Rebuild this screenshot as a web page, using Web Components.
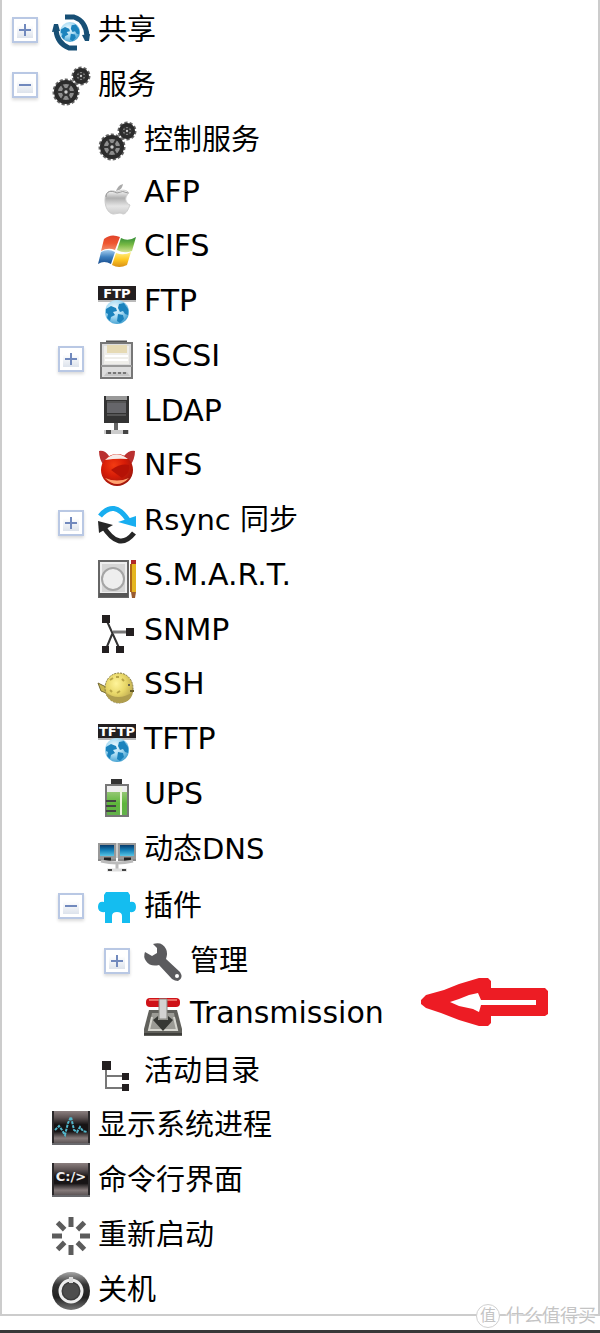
<!DOCTYPE html>
<html lang="zh-CN">
<head>
<meta charset="utf-8">
<title>服务</title>
<style>
    body {
        margin: 0;
        background: #fff;
        color: #000;
        font-family: "DejaVu Sans", "Noto Sans CJK SC", sans-serif;
        font-size: 29px;
        line-height: 36px;
    }
</style>
</head>
<body>
<nav-panel>
    <tree-view>
        <tree-item icon="share" label="共享" branch></tree-item>
        <tree-item icon="gears" label="服务" branch open>
            <tree-item icon="gears" label="控制服务"></tree-item>
            <tree-item icon="apple" label="AFP"></tree-item>
            <tree-item icon="windows" label="CIFS"></tree-item>
            <tree-item icon="ftp" label="FTP"></tree-item>
            <tree-item icon="iscsi" label="iSCSI" branch></tree-item>
            <tree-item icon="ldap" label="LDAP"></tree-item>
            <tree-item icon="nfs" label="NFS"></tree-item>
            <tree-item icon="rsync" label="Rsync 同步" branch></tree-item>
            <tree-item icon="smart" label="S.M.A.R.T."></tree-item>
            <tree-item icon="snmp" label="SNMP"></tree-item>
            <tree-item icon="ssh" label="SSH"></tree-item>
            <tree-item icon="tftp" label="TFTP"></tree-item>
            <tree-item icon="ups" label="UPS"></tree-item>
            <tree-item icon="dns" label="动态DNS"></tree-item>
            <tree-item icon="plugin" label="插件" branch open>
                <tree-item icon="wrench" label="管理" branch></tree-item>
                <tree-item icon="transmission" label="Transmission">
                    <red-arrow slot="note"></red-arrow>
                </tree-item>
            </tree-item>
            <tree-item icon="directory" label="活动目录"></tree-item>
        </tree-item>
        <tree-item icon="process" label="显示系统进程"></tree-item>
        <tree-item icon="shell" label="命令行界面"></tree-item>
        <tree-item icon="restart" label="重新启动"></tree-item>
        <tree-item icon="power" label="关机"></tree-item>
    </tree-view>
    <site-mark slot="mark"></site-mark>
</nav-panel>

<script>
const globe = (cx, cy, r) => `
    <circle cx="${cx}" cy="${cy}" r="${r}" fill="url(#globe)"/>
    <g transform="translate(${cx} ${cy}) scale(${r / 12})" fill="#1b83bd">
        <path d="M-11 -3L-6 -6L-1 -4L0 -1L-4 0L-2 3L-6 5L-7 9L-10 6L-9 2L-11 1Z"/>
        <path d="M2 -8L7 -9L11 -3L11 3L8 2L6 -1L3 0L1 -4Z"/>
        <path d="M1 2L6 3L7 7L3 11L0 9Z"/>
    </g>`;

const gear = (cx, cy, r) => `
    <circle cx="${cx}" cy="${cy}" r="${r}" fill="none" stroke="#666" stroke-width="3" stroke-dasharray="3 2"/>
    <circle cx="${cx}" cy="${cy}" r="${r - 2}" fill="#8d8d8d" stroke="#2b2b2b" stroke-width="4"/>
    ${[0, 60, 120].map((a) => `
    <path d="M${cx - r + 3} ${cy}H${cx + r - 3}" stroke="#333" stroke-width="2" transform="rotate(${a} ${cx} ${cy})"/>`).join('')}
    <circle cx="${cx}" cy="${cy}" r="${r / 3}" fill="#333"/>
    <circle cx="${cx}" cy="${cy}" r="${r / 7}" fill="#ccc"/>`;

const sign = (text, size) => `
    <rect width="38" height="14" fill="#231f20"/>
    <rect y="14" width="38" height="2" fill="#bbb"/>
    <text x="19" y="12" text-anchor="middle" font-family="DejaVu Sans" font-weight="bold" font-size="${size}" fill="#fff">${text}</text>
    ${globe(19, 26, 12)}`;

const monitor = (x) => `
    <rect x="${x}" y="9" width="18" height="16" fill="#999"/>
    <rect x="${x + 2}" y="11" width="14" height="11" fill="url(#screen)"/>
    <path d="M${x} 26H${x + 18}" stroke="#888" stroke-width="2"/>
    <path d="M${x + 6} 25H${x + 13}" stroke="#222" stroke-width="3"/>`;

const metal = (y) => `
    <rect y="${y}" width="38" height="34" fill="url(#metal)"/>
    <path d="M1 ${y}V${y + 34}M37 ${y}V${y + 34}" stroke="#2b292b" stroke-width="2"/>
    <path d="M0 ${y + 33}H38" stroke="#68686c" stroke-width="2"/>`;

const ICONS = {
    share: `
        ${globe(18, 20, 10)}
        <path d="M13 5H22Q34 9 35 24" fill="none" stroke="#174f75" stroke-width="5"/>
        <path d="M30 23L38 22L37 29H33Z" fill="#174f75"/>
        <path d="M25 36H17Q5 31 4 18" fill="none" stroke="#174f75" stroke-width="5"/>
        <path d="M0 20L2 12H6L8 19Z" fill="#174f75"/>`,
    gears: gear(14, 25, 12) + gear(29, 9, 8),
    apple: `
        <path d="M18 14C20 9 22 8 25 7C24 11 23 13 18 14Z" fill="#aaa"/>
        <path d="M19 15C24 12 29 13 31 16C26 20 27 26 32 28C30 33 28 37 25 37C21 35 19 37 15 37C10 36 7 30 7 23C7 15 12 12 19 15Z" fill="url(#silver)" stroke="#ccc"/>
        <path d="M8 20C8 14 13 13 19 16Q25 13 30 16" fill="none" stroke="#999" stroke-width="1"/>`,
    windows: `
        <path d="M6 8Q13 2 22 6L17 19Q10 16 3 20Z" fill="url(#red)"/>
        <path d="M23 7Q30 11 38 6L34 20Q26 23 19 19Z" fill="url(#green)"/>
        <path d="M3 21Q10 17 17 21L13 33Q6 29 0 33Z" fill="url(#blue)"/>
        <path d="M18 22Q26 25 33 21L29 34Q21 38 14 34Z" fill="url(#yellow)"/>`,
    ftp: sign('FTP', 13),
    tftp: sign('TFTP', 13),
    iscsi: `
        <path d="M8 1H29" stroke="#555" stroke-width="3"/>
        <rect x="3" y="2" width="31" height="35" fill="#ddd" stroke="#777" stroke-width="2"/>
        <rect x="6" y="5" width="25" height="18" fill="#efeeea"/>
        <path d="M9 4H29V12H9Z" fill="#e6dab4"/>
        <path d="M7 15H30M7 19H30" stroke="#fff" stroke-width="2"/>
        <path d="M3 25H34" stroke="#999" stroke-width="2"/>
        <path d="M9 31H29L32 35H6Z" fill="#c5c5c5"/>
        <path d="M10 32H28" stroke="#777" stroke-width="2" stroke-dasharray="3 2"/>`,
    ldap: `
        <rect x="6" width="25" height="27" fill="#333"/>
        <path d="M8 0H29V4H8Z" fill="#999"/>
        <path d="M9 7H28V17H9Z" fill="#66666a"/>
        <path d="M9 6H28M9 19H28" stroke="#777"/>
        <path d="M18 27V35" stroke="#666" stroke-width="4"/>
        <path d="M6 36H31" stroke="#ccc" stroke-width="4"/>
        <path d="M8 36H13M25 36H30" stroke="#444" stroke-width="4"/>`,
    nfs: `
        <path d="M1 1Q7 0 11 6L6 16Q1 9 1 1ZM37 1Q31 0 26 6L32 16Q37 9 37 1Z" fill="#b93030"/>
        <circle cx="19" cy="20" r="16" fill="url(#ball)"/>
        <path d="M7 10Q18 -1 30 9Q19 8 7 10Z" fill="#f8ebe8"/>
        <path d="M13 20Q23 13 31 15Q33 22 24 28Z" fill="#b51206"/>
        <path d="M7 28Q19 40 31 28Q19 33 7 28Z" fill="#ffa472"/>`,
    rsync: `
        <path d="M2 11Q16 -6 30 15" fill="none" stroke="#18aef0" stroke-width="5"/>
        <path d="M38 11V22L20 17Z" fill="#18aef0"/>
        <path d="M5 21Q21 47 36 28" fill="none" stroke="#262626" stroke-width="5"/>
        <path d="M0 16L15 20L1 28Z" fill="#262626"/>`,
    smart: `
        <rect x="1" y="1" width="29" height="36" fill="#d5d5d5" stroke="#666" stroke-width="2"/>
        <path d="M3 3H28V33H3Z" fill="none" stroke="#eee" stroke-width="2"/>
        <circle cx="15" cy="19" r="11" fill="#eee" stroke="#a5a5a5" stroke-width="2"/>
        <path d="M1 35H30" stroke="#555" stroke-width="4"/>
        <path d="M33 4H38V32H33Z" fill="#e5b520"/>
        <path d="M33 4V32" stroke="#b06818" stroke-width="2"/>
        <path d="M33 0H38V4H33Z" fill="#b02828"/>
        <path d="M33 32H38L37 38H34Z" fill="#9a5c30"/>`,
    snmp: `
        <path d="M8 4L22 35M15 17L8 34" fill="none" stroke="#333" stroke-width="2"/>
        <path d="M15 17H32" stroke="#777" stroke-width="3"/>
        <path d="M4 0H12V8H4ZM28 13H36V21H28ZM4 31H11V38H4ZM18 31H26V38H18Z" fill="#231f20"/>`,
    ssh: `
        <path d="M8 18L0 14L3 22L8 24Z" fill="#c9b74c" stroke="#756b36"/>
        <ellipse cx="21" cy="19" rx="14" ry="15" fill="url(#fish)" stroke="#837943" stroke-dasharray="2 1"/>
        <path d="M7 23Q20 33 35 23Q33 34 21 34Q10 33 7 23Z" fill="#b09e4d"/>
        <path d="M12 11L15 9M18 8H21M24 10L26 12M12 21L14 23M19 24L22 22" stroke="#b8a546" stroke-width="2"/>
        <circle cx="31" cy="16" r="1" fill="#444"/>
        <path d="M32 22H36" stroke="#655b25" stroke-width="2"/>`,
    ups: `
        <rect x="13" width="11" height="6" fill="#333"/>
        <rect x="8" y="6" width="22" height="31" fill="#eee" stroke="#777" stroke-width="2"/>
        <rect x="9" y="13" width="20" height="23" fill="url(#charge)"/>
        <path d="M23 8V36" stroke="#eef7dd" stroke-width="2"/>
        <path d="M8 22H18M8 27H18M8 32H18" stroke="#444" stroke-width="2"/>`,
    dns: `
        <path d="M17 9H21V24H17Z" fill="#ccc"/>
        ${monitor(0)}${monitor(20)}
        <path d="M3 27Q19 31 35 27M19 28V36" fill="none" stroke="#bbb" stroke-width="3"/>
        <path d="M9 36H29" stroke="#ddd" stroke-width="3"/>
        <path d="M10 36H14M24 36H28" stroke="#444" stroke-width="2"/>`,
    plugin: `
        <path d="M8 4H30L32 7V14Q38 13 38 19Q38 25 32 24V35H24V28Q24 24 19 24Q14 24 14 28V35H7V24Q0 25 0 19Q0 13 6 14V7Z" fill="#14bdf0"/>`,
    wrench: `
        <path d="M9 1Q18 -2 22 6Q24 10 22 16L36 29Q40 35 34 38Q31 38 28 36L15 22Q6 24 2 18Q-1 14 1 9L8 13L13 10L13 5Z" fill="#5b5b5e"/>
        <circle cx="33" cy="33" r="2" fill="#fff"/>`,
    transmission: `
        <path d="M5 12H33L38 31V38H0V31Z" fill="#60605b"/>
        <path d="M8 15H30L33 32H5Z" fill="#9b9b95"/>
        <path d="M8 19L5 32H33L30 19" fill="none" stroke="#d6d6cf" stroke-width="2"/>
        <path d="M0 36H38" stroke="#3e3e3a" stroke-width="2"/>
        <rect x="2" width="34" height="9" rx="4" fill="#cf1218"/>
        <path d="M5 2H33" stroke="#ed6a63" stroke-width="2"/>
        <path d="M15 1H23V21H15Z" fill="#d3d3d1" stroke="#85857f"/>
        <path d="M14 18L9 22L19 33L29 22L24 18V22H14Z" fill="#363834"/>`,
    directory: `
        <path d="M8 10V35H26M8 23H26" fill="none" stroke="#777" stroke-width="2"/>
        <path d="M4 8H13V17H4ZM24 20H31V27H24ZM24 31H31V38H24Z" fill="#231f20"/>`,
    process: `
        ${metal(4)}
        <path d="M3 23L7 19L10 23L13 28L16 16L19 10L22 23L25 25L28 20L31 24L35 25" fill="none" stroke="#52b7cc" stroke-width="2" stroke-dasharray="3 1"/>`,
    shell: `
        ${metal(1)}
        <text x="19" y="19" text-anchor="middle" font-family="DejaVu Sans" font-weight="bold" font-size="13" fill="#eee">C:/&gt;</text>`,
    restart: [0, 45, 90, 135, 180, 225, 270, 315].map((a) => `
        <path d="M19 0V10" stroke="#5c5c5c" stroke-width="5" transform="rotate(${a} 19 19)"/>`).join(''),
    power: `
        <circle cx="19" cy="19" r="19" fill="url(#knob)"/>
        <circle cx="19" cy="19" r="11" fill="#3c3c3c" stroke="#eee" stroke-width="3"/>
        <path d="M19 5V11" stroke="#ddd" stroke-width="4"/>
        <circle cx="19" cy="19" r="8" fill="#4d4d4d"/>`
};

const linear = (id, ...stops) => `<linearGradient id="${id}" x2="0" y2="1">${stops.map((c, i) =>
    `<stop offset="${i / (stops.length - 1)}" stop-color="${c}"/>`).join('')}</linearGradient>`;

const radial = (id, ...stops) => `<radialGradient id="${id}" cx="40%" cy="35%" r="70%">${stops.map((c, i) =>
    `<stop offset="${i / (stops.length - 1)}" stop-color="${c}"/>`).join('')}</radialGradient>`;

const DEFS = `<defs>
    ${radial('globe', '#f2fbff', '#a8dbf3', '#3c9cce')}
    ${linear('screen', '#073a6b', '#1583bb', '#58c4e4')}
    ${linear('metal', '#8b7f7f', '#5b5152', '#171415', '#171415', '#867b7b', '#4c4647')}
    ${linear('silver', '#fff', '#b0b0b0', '#e5e5e5', '#ccc')}
    ${linear('red', '#e0442b', '#ef5630', '#f19473')}
    ${linear('green', '#2e8b35', '#77b944', '#d3e391')}
    ${linear('blue', '#a4cdee', '#3d7fbe', '#174c8d')}
    ${linear('yellow', '#fff18a', '#ffc822', '#d99016')}
    ${radial('ball', '#f33b12', '#d61c07', '#9b160d')}
    ${radial('fish', '#fff49a', '#e8d768', '#b4a04b')}
    ${linear('charge', '#94c774', '#5eb63b', '#63b04b')}
    ${linear('knob', '#a5a5a5', '#343434', '#202020', '#777')}
</defs>`;

class TreeIcon extends HTMLElement {
    constructor() {
        super();
        this.attachShadow({ mode: 'open' });
    }

    connectedCallback() {
        this.shadowRoot.innerHTML = `
            <style>
                :host {
                    display: block;
                    width: 38px;
                    height: 38px;
                }

                svg {
                    display: block;
                    overflow: visible;
                }
            </style>
            <svg viewBox="0 0 38 38" width="38" height="38" aria-hidden="true">${DEFS}${ICONS[this.getAttribute('name')]}</svg>
        `;
    }
}

class TreeItem extends HTMLElement {
    constructor() {
        super();
        this.attachShadow({ mode: 'open' });
    }

    connectedCallback() {
        this.render();
        this.setupEventListeners();
    }

    // items nest, so the depth is the number of items above this one
    get depth() {
        let depth = 0;
        let parent = this.parentElement.closest('tree-item');
        while (parent) {
            depth++;
            parent = parent.parentElement.closest('tree-item');
        }
        return depth;
    }

    // Han and Latin labels sit differently on the line
    get script() {
        const label = this.getAttribute('label');
        if (/^[\u4e00-\u9fff]+$/.test(label)) return 'han';
        return /[\u4e00-\u9fff]/.test(label) ? 'mixed' : 'latin';
    }

    render() {
        const label = this.getAttribute('label');
        this.shadowRoot.innerHTML = `
            <style>
                :host {
                    display: contents;
                }

                .row {
                    position: relative;
                    display: grid;
                    grid-template-columns: 26px 38px 1fr;
                    column-gap: 14px;
                    align-items: center;
                    padding-left: calc(10px + 46px * ${this.depth});
                }

                .toggle {
                    width: 26px;
                    height: 26px;
                    margin: 6px 0 0;
                    padding: 3px;
                    border: 2px solid #b9c8e4;
                    background: linear-gradient(#fff 20%, #dde3ec) content-box #fff;
                    box-shadow: 0 2px 3px rgba(0, 0, 0, 0.15);
                    cursor: pointer;
                }

                .toggle svg {
                    display: block;
                }

                .toggle .bar {
                    display: none;
                }

                .toggle[aria-expanded="false"] .bar {
                    display: inline;
                }

                tree-icon {
                    grid-column: 2;
                    margin-top: 8px;
                }

                a {
                    grid-column: 3;
                    justify-self: start;
                    margin-left: -6px;
                    color: inherit;
                    text-decoration: none;
                    white-space: nowrap;
                }

                .han {
                    padding-top: 6px;
                }

                .latin {
                    font-size: 30px;
                }

                slot.hidden {
                    display: none;
                }
            </style>
            <div class="row">
                ${this.hasAttribute('branch') ? `
                <button class="toggle" aria-label="${label}" aria-expanded="${this.hasAttribute('open')}">
                    <svg width="16" height="16" viewBox="0 0 16 16" stroke="#7189bd" stroke-width="2">
                        <path d="M2 8H14"/><path class="bar" d="M8 2V14"/>
                    </svg>
                </button>` : ''}
                <tree-icon name="${this.getAttribute('icon')}"></tree-icon>
                <a class="${this.script}" href="#${this.getAttribute('icon')}">${label}</a>
                <slot name="note"></slot>
            </div>
            <slot class="children"></slot>
        `;
    }

    setupEventListeners() {
        const toggle = this.shadowRoot.querySelector('.toggle');
        if (!toggle) return;

        toggle.addEventListener('click', () => {
            const open = this.toggleAttribute('open');
            toggle.setAttribute('aria-expanded', open);
            this.shadowRoot.querySelector('.children').classList.toggle('hidden', !open);
        });
    }
}

class TreeView extends HTMLElement {
    constructor() {
        super();
        this.attachShadow({ mode: 'open' });
        this.shadowRoot.innerHTML = `
            <style>
                :host {
                    display: grid;
                    grid-auto-rows: minmax(48px, 1fr);
                    flex: 1;
                    border: 2px solid #ccc;
                    border-top: none;
                }
            </style>
            <slot></slot>
        `;
    }
}

class NavPanel extends HTMLElement {
    constructor() {
        super();
        this.attachShadow({ mode: 'open' });
        this.shadowRoot.innerHTML = `
            <style>
                :host {
                    position: relative;
                    display: flex;
                    flex-direction: column;
                    min-height: 100vh;
                }

                footer {
                    height: 14px;
                    border-bottom: 3px solid #383838;
                }
            </style>
            <slot></slot>
            <footer></footer>
            <slot name="mark"></slot>
        `;
    }
}

class RedArrow extends HTMLElement {
    constructor() {
        super();
        this.attachShadow({ mode: 'open' });
        this.shadowRoot.innerHTML = `
            <style>
                :host {
                    position: absolute;
                    left: 419px;
                    top: -8px;
                }

                svg {
                    display: block;
                }
            </style>
            <svg width="127" height="48" viewBox="0 0 127 48" aria-hidden="true">
                <path fill="#ed1c24" fill-rule="evenodd" d="M0 22L5 17L23 12L38 6L58 0H67L70 3V10H124L127 13V36L124 38H70V45L67 48H58L38 42L20 35L5 30L0 26ZM29 24L38 28L52 31L58 34L60 27H115V22H60L57 15L48 17L38 21Z"/>
            </svg>
        `;
    }
}

class SiteMark extends HTMLElement {
    constructor() {
        super();
        this.attachShadow({ mode: 'open' });
        this.shadowRoot.innerHTML = `
            <style>
                :host {
                    position: absolute;
                    right: 4px;
                    bottom: 5px;
                    display: flex;
                    align-items: center;
                    gap: 6px;
                    color: #c4c4c4;
                    font-size: 18px;
                    line-height: 24px;
                    text-shadow: 0 0 2px #fff, 0 0 2px #fff, -1px -1px #fff;
                }

                .badge {
                    width: 22px;
                    height: 22px;
                    border: 1px solid #d0d0d0;
                    border-radius: 50%;
                    background: #fff;
                    font-size: 16px;
                    line-height: 22px;
                    text-align: center;
                }
            </style>
            <span class="badge">值</span>
            <span>什么值得买</span>
        `;
    }
}

customElements.define('tree-icon', TreeIcon);
customElements.define('tree-item', TreeItem);
customElements.define('tree-view', TreeView);
customElements.define('nav-panel', NavPanel);
customElements.define('red-arrow', RedArrow);
customElements.define('site-mark', SiteMark);
</script>
</body>
</html>
